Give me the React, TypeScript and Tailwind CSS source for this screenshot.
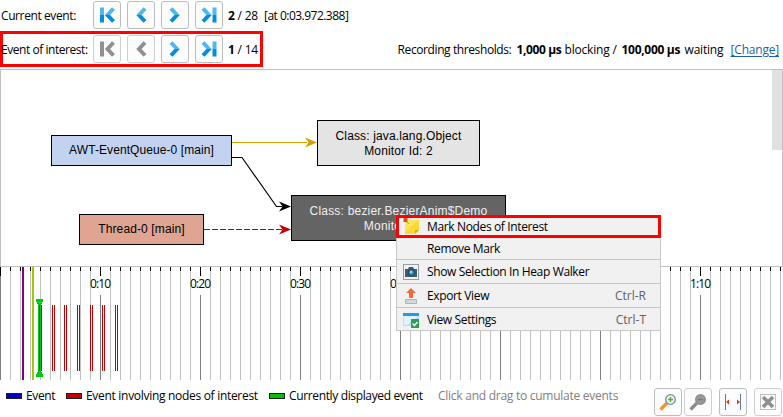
import type { ReactNode } from "react";

type Kind = "first" | "prev" | "next" | "last";

const MARKS: Record<Kind, ReactNode> = {
  first: <path d="M3 0.500v15M14.500 1.500 8.500 8l6 6.500" />,
  prev: <path d="M12 1.500 6 8l6 6.500" />,
  next: <path d="m4 1.500 6 6.500-6 6.500" />,
  last: <path d="m2 1.500 6 6.500-6 6.500M13.500 0.500v15" />,
};

function NavButton({ kind, disabled = false }: { kind: Kind; disabled?: boolean }) {
  const stroke = disabled ? "#909090" : "url(#navBlue)";
  return (
    <button
      className={`flex size-7 shrink-0 items-center justify-center rounded-[3px] border bg-[#fcfcfc] ${
        disabled ? "border-[#cfcfcf]" : "border-[#bdbdbd]"
      }`}
    >
      <svg width="16" height="16" viewBox="0 0 16 16" fill="none" stroke={stroke} strokeWidth="4" className="shrink-0">
        {MARKS[kind]}
      </svg>
    </button>
  );
}

function ToolButton({ children, disabled = false }: { children: ReactNode; disabled?: boolean }) {
  return (
    <button
      className={`flex size-7 shrink-0 items-center justify-center rounded-[3px] border bg-[#fcfcfc] ${
        disabled ? "border-[#cfcfcf]" : "border-[#bdbdbd]"
      }`}
    >
      {children}
    </button>
  );
}

function Magnifier({ zoomIn }: { zoomIn: boolean }) {
  return (
    <svg width="18" height="18" viewBox="0 0 18 18" fill="none">
      <path d="M1.500 16.500 8 10" stroke={zoomIn ? "#f7931e" : "#8c8c8c"} strokeWidth="3.200" />
      <circle cx="11.5" cy="6.5" r="4.8" fill={zoomIn ? "#eef5f8" : "#999"} stroke={zoomIn ? "#718e9b" : "#8c8c8c"} strokeWidth="1.3" />
      <path d={zoomIn ? "M9 6.5h5M11.5 4v5" : "M9 6.5h5"} stroke={zoomIn ? "#66a82a" : "#777"} strokeWidth="1.4" />
    </svg>
  );
}

function Toolbar() {
  return (
    <header className="flex h-[69px] shrink-0 flex-col">
      <div className="flex h-[31px] items-center pb-[1px] pl-px">
        <div className="w-[92px] pt-px tracking-[-0.4px]">Current event:</div>
        <div className="flex gap-1.5">
          <NavButton kind="first" />
          <NavButton kind="prev" />
          <NavButton kind="next" />
          <NavButton kind="last" />
        </div>
        <div className="ml-[5px] w-9 pt-px tracking-[-0.2px]">
          <b>2</b> / 28
        </div>
        <div className="pt-px tracking-[-0.52px]">[at 0:03.972.388]</div>
      </div>
      <div className="flex h-9 items-center justify-between pr-1">
        <div className="flex h-9 w-[263px] items-center border-3 border-[#ff0000]">
          <div className="-ml-0.5 w-[92px] pt-px tracking-[-0.45px]">Event of interest:</div>
          <div className="flex gap-1.5">
            <NavButton kind="first" disabled />
            <NavButton kind="prev" disabled />
            <NavButton kind="next" />
            <NavButton kind="last" />
          </div>
          <div className="ml-[5px] pt-px tracking-[-0.2px]">
            <b>1</b> / 14
          </div>
        </div>
        <div className="flex pt-px">
          <span className="w-[119px] tracking-[-0.4px]">Recording thresholds:</span>
          <b className="w-12 tracking-[-0.4px]">1,000 µs</b>
          <span className="w-[57px] tracking-[-0.2px]">blocking /</span>
          <b className="w-[63px] tracking-[-0.3px]">100,000 µs</b>
          <span className="w-[46px] tracking-[-0.2px]">waiting</span>
          <a className="tracking-[-0.2px] text-[#1a5fb0] underline underline-offset-2">[Change]</a>
        </div>
      </div>
    </header>
  );
}

function Node({ className, lines }: { className: string; lines: string[] }) {
  return (
    <div
      className={`absolute flex flex-col items-center justify-center border border-black font-['Liberation_Sans',sans-serif] text-xs/[15px] ${className}`}
    >
      {lines.map((line) => (
        <div key={line} className="whitespace-nowrap">
          {line}
        </div>
      ))}
    </div>
  );
}

function Diagram() {
  return (
    <main className="relative h-[198px] shrink-0 border border-[#c0c0c0] bg-white">
      <svg className="absolute -top-px -left-px" width="520" height="190" viewBox="0 69 520 190" fill="none">
        <path d="M232 142.5h75" stroke="#d4a000" />
        <path d="m305 137.500 12 5-12 5 3.500-5z" fill="#d4a000" />
        <path d="M232 157.500h10l34.500 49h6" stroke="#000" strokeWidth="1.150" />
        <path d="m279 201.500 12 5-12 5 3.500-5z" fill="#000" />
        <path d="M204 229.500h78" stroke="#c00000" strokeDasharray="6 2" />
        <path d="m279 224.500 12 5-12 5 3.500-5z" fill="#c00000" />
      </svg>
      <Node className="top-[65px] left-[50px] h-[31px] w-[181px] bg-[#c3d3ef] tracking-[0.08px]" lines={["AWT-EventQueue-0 [main]"]} />
      <Node className="top-[50px] left-[316px] h-[46px] w-[163px] bg-[#e4e4e4] pt-px tracking-[0.14px]" lines={["Class: java.lang.Object", "Monitor Id: 2"]} />
      <Node className="top-[144px] left-[78px] h-[31px] w-[125px] bg-[#dfa592] tracking-[0.12px]" lines={["Thread-0 [main]"]} />
      <Node
        className="top-[125px] left-[290px] h-[46px] w-[215px] bg-[#646464] pt-px tracking-[0.2px] text-[#f0f0f0]"
        lines={["Class: bezier.BezierAnim$Demo", "Monitor Id: 1"]}
      />
      <div className="ml-auto h-20 w-2.5 bg-[#e1e1e1]" />
    </main>
  );
}

const TICKS = Array.from({ length: 79 }, (_, i) => i * 10);
const EVENTS = [52, 64, 77, 90, 102, 115];
const LABELS = [
  { text: "0:10", x: 100.5 },
  { text: "0:20", x: 200.5 },
  { text: "0:30", x: 300.5 },
  { text: "0:40", x: 400.5 },
  { text: "1:10", x: 700.5 },
];

function Timeline() {
  return (
    <section className="h-[113px] shrink-0">
      <svg width="783" height="113" viewBox="0 267 783 113" shapeRendering="crispEdges">
        {TICKS.map((x) => {
          const major = x % 100 === 0;
          return (
            <g key={x}>
              <rect x={x} y={major ? (x === 0 ? 276 : 295) : 271} width="1" height="110" fill={major ? "#808080" : "#c0c0c0"} />
              <rect x={x} y="267" width="1" height={major ? 9 : 4} fill="#000" />
            </g>
          );
        })}
        <rect x="22" y="267" width="2" height="113" fill="#800080" />
        <rect x="32" y="267" width="2" height="113" fill="#a0c800" />
        {EVENTS.map((x) => (
          <path key={x} d={`M${x} 305h1v66h-1zM${x + 2} 305h1v66h-1z`} fill="#c00000" />
        ))}
        <path d="M38 299h3v78h-3z" fill="#00c814" />
        <path d="M39 305h1v66h-1z" fill="#7a3000" />
        <path d="M41 305h1v66h-1z" fill="#c00000" />
        <path d="M36 299h7v2l-2 4h-3l-2-4zM36 377h7v-2l-2-4h-3l-2 4z" fill="#00c814" />
        {LABELS.map(({ text, x }) => (
          <text key={text} x={x} y="288" textAnchor="middle" textLength="21" className="fill-black text-xs">
            {text}
          </text>
        ))}
      </svg>
    </section>
  );
}

function Legend({ color, label, className }: { color: string; label: string; className: string }) {
  return (
    <div className={`flex items-center gap-1 whitespace-nowrap ${className}`}>
      <span className={`h-1.5 w-4 border border-[#202020] ${color}`} />
      {label}
    </div>
  );
}

function Footer() {
  return (
    <footer className="flex h-[37px] shrink-0 pl-1.5 pr-px">
      <div className="flex h-8 w-[648px] items-center">
        <Legend className="w-[60px] tracking-[-0.35px]" color="bg-[#0000c0]" label="Event" />
        <Legend className="w-[203px] tracking-[-0.3px]" color="bg-[#c00000]" label="Event involving nodes of interest" />
        <Legend className="w-[169px] tracking-[-0.36px]" color="bg-[#00c000]" label="Currently displayed event" />
        <span className="whitespace-nowrap tracking-[-0.26px] text-[#808080]">Click and drag to cumulate events</span>
      </div>
      <div className="flex pt-2">
        <div className="mr-[7px] flex gap-0.5">
          <ToolButton>
            <Magnifier zoomIn />
          </ToolButton>
          <ToolButton disabled>
            <Magnifier zoomIn={false} />
          </ToolButton>
        </div>
        <div className="flex gap-[7px]">
          <ToolButton>
            <svg width="18" height="16" viewBox="0 0 18 16">
              <path d="M1 0h1v16H1zM16 0h1v16h-1z" fill="#607d8b" />
              <path d="m2 8 3-2.500v5zM16 8l-3-2.500v5z" fill="#d83b0c" />
            </svg>
          </ToolButton>
          <ToolButton disabled>
            <svg width="16" height="16" viewBox="0 0 16 16" fill="none">
              <path d="M.5.5h15v15H.5z" stroke="#808080" strokeDasharray="1 1" />
              <path d="m3 3 10 10m0-10-10 10" stroke="#909090" strokeWidth="3.600" />
            </svg>
          </ToolButton>
        </div>
      </div>
    </footer>
  );
}

const NoteIcon = (
  <svg width="17" height="17" viewBox="0 0 17 17">
    <path d="M2 2h14v10l-4 4H2z" fill="#fdd835" />
    <path d="M2 2h14L2 14z" fill="#ffe35a" />
    <path d="M12 16v-4h4z" fill="#e5a916" />
    <path d="m3 3 3 3" stroke="#999" />
    <path d="M.5 0h4v4h-4z" fill="#d9501e" />
  </svg>
);

const CameraIcon = (
  <svg width="16" height="16" viewBox="0 0 16 16" fill="none">
    <path d="M.5.5h15v15H.5z" stroke="#35505c" strokeDasharray="1 1" />
    <path d="M2 5h3l1-2h4l1 2h3v8H2z" fill="#455a64" />
    <circle cx="8.500" cy="8.500" r="3" fill="#1e9be0" stroke="#263c46" />
    <circle cx="8" cy="8" r="1.200" fill="#8fd6fa" />
  </svg>
);

const ExportIcon = (
  <svg width="16" height="16" viewBox="0 0 16 16">
    <path d="m8 0 5 5h-3v5H6V5H3z" fill="#f4693a" />
    <path d="M2.500 11.500h11v4h-11z" fill="#cfd8dc" stroke="#a9b5bb" />
  </svg>
);

const SettingsIcon = (
  <svg width="16" height="16" viewBox="0 0 16 16" fill="none">
    <path d="M0 1h16v13H0z" fill="#b8e2f8" />
    <path d="M1 4h14L4 13H1z" fill="#e1f4fd" />
    <path d="M0 1h16v3H0z" fill="#1e9be9" />
    <path d="M8 7h8v9H8z" fill="#2e9e4f" />
    <path d="m9.500 11.500 2 2 3-3.500" stroke="#fff" strokeWidth="1.500" />
  </svg>
);

function MenuItem({ icon, label, shortcut, className }: { icon?: ReactNode; label: string; shortcut?: string; className: string }) {
  return (
    <div className={`flex items-center ${className}`}>
      <span className="w-6 shrink-0">{icon}</span>
      <span className="flex-1 whitespace-nowrap tracking-[-0.36px]">{label}</span>
      {shortcut && <span className="text-[#606060]">{shortcut}</span>}
    </div>
  );
}

function ContextMenu() {
  return (
    <div className="absolute top-[215px] left-[396px] w-[265px] bg-[#f1f1f1]">
      <MenuItem className="h-[23px] border-3 border-[#ff0000] pl-1" icon={NoteIcon} label="Mark Nodes of Interest" />
      <div className="border border-t-0 border-[#c8c8c8]">
        <MenuItem className="h-[21px] pr-3.5 pl-1.5" label="Remove Mark" />
        <MenuItem className="h-6 border-t border-[#c8c8c8] pr-3.5 pl-1.5" icon={CameraIcon} label="Show Selection In Heap Walker" />
        <MenuItem className="h-6 border-t border-[#c8c8c8] pr-3.5 pl-1.5" icon={ExportIcon} label="Export View" shortcut="Ctrl-R" />
        <MenuItem className="h-[23px] border-t border-[#c8c8c8] pt-px pr-3.5 pl-1.5" icon={SettingsIcon} label="View Settings" shortcut="Ctrl-T" />
      </div>
    </div>
  );
}

export default function App() {
  return (
    <div className="relative flex h-[417px] w-[783px] flex-col overflow-hidden bg-white font-['Open_Sans',sans-serif] text-xs/4 text-black">
      <svg className="absolute size-0">
        <linearGradient id="navBlue" gradientUnits="userSpaceOnUse" x1="0" y1="0" x2="0" y2="16">
          <stop offset="0.5" stopColor="#4fb8ee" />
          <stop offset="0.5" stopColor="#088cda" />
        </linearGradient>
      </svg>
      <Toolbar />
      <Diagram />
      <Timeline />
      <Footer />
      <ContextMenu />
    </div>
  );
}
